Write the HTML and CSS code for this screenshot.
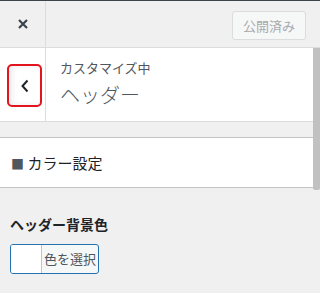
FILE: index.html
```html
<!DOCTYPE html>
<html lang="ja">
<head>
  <meta charset="UTF-8" />
  <title>カスタマイズ中 ヘッダー</title>
  <link rel="stylesheet" href="styles.css">
</head>
<body>
  <div class="header">
    <button class="close-btn" aria-label="閉じる">
      <svg width="10" height="10" viewBox="0 0 10 10"><path d="M1 1 L9 9 M9 1 L1 9" stroke="#3c434a" stroke-width="2.2" fill="none"/></svg>
    </button>
    <button class="publish-btn" disabled>公開済み</button>
  </div>
  <div class="body-wrap">
    <div class="scroll-content">
      <div class="panel-title">
        <div class="back-col">
          <button class="back-btn" aria-label="戻る">
            <svg width="10" height="14" viewBox="0 0 10 14"><path d="M7.5 1.5 L2.5 7 L7.5 12.5" stroke="#1d2327" stroke-width="2" fill="none"/></svg>
          </button>
        </div>
        <div class="title-text">
          <span class="title-small">カスタマイズ中</span>
          <span class="title-big">ヘッダー</span>
        </div>
      </div>
      <div class="section"><span class="square">■</span> カラー設定</div>
      <div class="control">
        <div class="control-label">ヘッダー背景色</div>
        <button class="color-btn">
          <span class="swatch"></span>
          <span class="color-text">色を選択</span>
        </button>
      </div>
    </div>
    <div class="scrollbar"><div class="thumb"></div></div>
  </div>
</body>
</html>
```
FILE: styles.css
```css
html, body {
  margin: 0;
  padding: 0;
  font-family: "Noto Sans CJK JP", "Noto Sans", sans-serif;
  background-color: #f0f0f1;
  color: #1d2327;
  width: 320px;
  height: 293px;
  overflow: hidden;
}
button {
  font-family: inherit;
}
.header {
  display: flex;
  align-items: center;
  height: 46px;
  border-top: 1px solid #3c434a;
  border-bottom: 1px solid #dcdcde;
  background: #f0f0f1;
}
.close-btn {
  width: 46px;
  height: 46px;
  border: none;
  border-right: 1px solid #dcdcde;
  background: transparent;
  padding: 0 0 0 1px;
  display: flex;
  align-items: center;
  justify-content: center;
}
.publish-btn {
  margin-left: auto;
  margin-right: 14px;
  margin-top: 2px;
  width: 74px;
  height: 29px;
  font-size: 13px;
  color: #a7aaad;
  background: #f6f7f7;
  border: 1px solid #dcdcde;
  border-radius: 3px;
  padding: 0;
}
.body-wrap {
  display: flex;
}
.scroll-content {
  flex: 1;
}
.scrollbar {
  width: 7px;
}
.thumb {
  height: 142px;
  background: #c1c1c1;
  border-radius: 0 0 2px 2px;
}
.panel-title {
  display: flex;
  height: 73px;
  background: #fff;
  border-bottom: 1px solid #dcdcde;
}
.back-col {
  width: 45px;
  border-right: 1px solid #dcdcde;
  display: flex;
  align-items: center;
  justify-content: center;
}
.back-btn {
  width: 35px;
  height: 43px;
  margin: 2px 0 0 4px;
  border: 2px solid #e3141e;
  border-radius: 5px;
  background: #fff;
  box-shadow: inset 3px 0 6px rgba(0, 0, 0, 0.08);
  display: flex;
  align-items: center;
  justify-content: center;
  padding: 0;
}
.title-text {
  display: flex;
  flex-direction: column;
  padding: 10px 0 0 14px;
  color: #50575e;
}
.title-small {
  font-size: 13px;
  line-height: 20px;
}
.title-big {
  font-size: 20px;
  line-height: 30px;
  margin-top: 2px;
  font-weight: 300;
}
.section {
  margin-top: 15px;
  height: 49px;
  background: #fff;
  border-top: 1px solid #c3c4c7;
  border-bottom: 1px solid #c3c4c7;
  font-size: 15px;
  line-height: 49px;
  padding-left: 11px;
  color: #1d2327;
}
.square {
  color: #50575e;
  font-size: 13px;
}
.control {
  padding: 26px 10px 0;
}
.control-label {
  font-size: 14px;
  font-weight: 600;
  line-height: 20px;
  color: #1d2327;
}
.color-btn {
  margin-top: 10px;
  width: 89px;
  height: 30px;
  display: flex;
  padding: 0;
  border: 1px solid #2271b1;
  border-radius: 3px;
  background: #f6f7f7;
  overflow: hidden;
}
.swatch {
  width: 30px;
  height: 100%;
  background: #fff;
  border-right: 1px solid #c3c4c7;
}
.color-text {
  flex: 1;
  font-size: 13px;
  line-height: 28px;
  color: #50575e;
  text-align: center;
}
```
